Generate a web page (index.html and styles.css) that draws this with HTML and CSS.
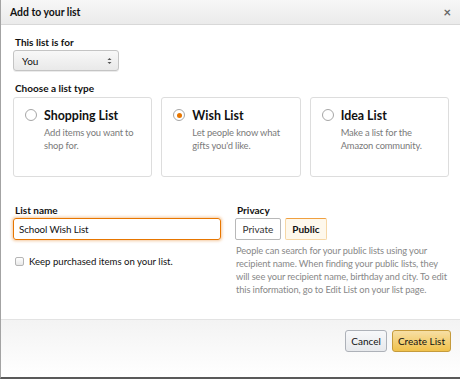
FILE: index.html
```html
<!DOCTYPE html>
<html>
<head>
    <title>Add to your list</title>
    <link rel="stylesheet" href="styles.css">
</head>
<body>
<div class="dialog">
    <div class="header">
        <span>Add to your list</span>
        <span class="close">&#215;</span>
    </div>
    <div class="content">
        <div class="label">This list is for</div>
        <div class="select">
            <span>You</span>
            <svg width="5" height="8" viewBox="0 0 5 8"><path d="M0.5 3 L2.5 1 L4.5 3 Z M0.5 5 L2.5 7 L4.5 5 Z" fill="#555"/></svg>
        </div>

        <div class="label type-label">Choose a list type</div>
        <div class="cards">
            <div class="card">
                <span class="radio"></span>
                <div>
                    <div class="card-title">Shopping List</div>
                    <div class="card-desc">Add items you want to shop for.</div>
                </div>
            </div>
            <div class="card">
                <span class="radio checked"></span>
                <div>
                    <div class="card-title">Wish List</div>
                    <div class="card-desc">Let people know what gifts you'd like.</div>
                </div>
            </div>
            <div class="card">
                <span class="radio"></span>
                <div>
                    <div class="card-title">Idea List</div>
                    <div class="card-desc">Make a list for the Amazon community.</div>
                </div>
            </div>
        </div>

        <div class="row">
            <div class="col-left">
                <div class="label">List name</div>
                <div class="text-input">School Wish List</div>
                <label class="keep"><span class="checkbox"></span>Keep purchased items on your list.</label>
            </div>
            <div class="col-right">
                <div class="label">Privacy</div>
                <div class="toggle">
                    <span class="toggle-btn">Private</span>
                    <span class="toggle-btn active">Public</span>
                </div>
                <p class="note">People can search for your public lists using your recipient name. When finding your public lists, they will see your recipient name, birthday and city. To edit this information, go to Edit List on your list page.</p>
            </div>
        </div>
    </div>
    <div class="footer">
        <span class="btn">Cancel</span>
        <span class="btn primary">Create List</span>
    </div>
</div>
</body>
</html>
```

FILE: styles.css
```css
body {
    margin: 0;
    font-family: Lato, "DejaVu Sans", sans-serif;
    color: #111;
    background-color: white;
}

.dialog {
    height: 379px;
    box-sizing: border-box;
    border-left: 1px solid #a3a3a3;
    border-bottom: 2px solid #5a5a5a;
    display: flex;
    flex-direction: column;
}

.header {
    height: 24px;
    flex: none;
    display: flex;
    align-items: center;
    justify-content: space-between;
    padding: 0 9px 0 9px;
    background: linear-gradient(#f7f7f7, #ebebeb);
    border-bottom: 1px solid #d8d8d8;
    font-size: 10.4px;
    font-weight: bold;
}

.close {
    font-size: 13px;
    color: #666;
}

.content {
    flex: 1;
    padding: 10px 11px 0 12px;
}

.label {
    font-size: 10px;
    font-weight: bold;
    line-height: 14px;
    margin-left: 2px;
}

.select {
    width: 106px;
    height: 21px;
    box-sizing: border-box;
    margin-top: 1px;
    border: 1px solid #c4c4c4;
    border-radius: 3px;
    background: linear-gradient(#f8f8f8, #e9e9e9);
    box-shadow: 0 1px 0 rgba(0, 0, 0, 0.08);
    display: flex;
    align-items: center;
    justify-content: space-between;
    padding: 0 6px 0 8px;
    font-size: 10px;
}

.type-label {
    margin-top: 10px;
}

.cards {
    display: grid;
    grid-template-columns: 1fr 1fr 1fr;
    column-gap: 9px;
    margin-top: 2px;
}

.card {
    height: 80px;
    box-sizing: border-box;
    border: 1px solid #dddddd;
    border-radius: 3px;
    padding: 10px 8px 0 11px;
    display: flex;
    gap: 7px;
}

.radio {
    flex: none;
    width: 12px;
    height: 12px;
    box-sizing: border-box;
    margin-top: 1px;
    border: 1px solid #a6a6a6;
    border-radius: 50%;
    background: white;
    display: flex;
    align-items: center;
    justify-content: center;
}

.radio.checked::after {
    content: "";
    width: 5px;
    height: 5px;
    border-radius: 50%;
    background-color: #e77600;
}

.card-title {
    font-size: 12.4px;
    font-weight: bold;
    line-height: 15px;
}

.card-desc {
    font-size: 9.4px;
    letter-spacing: -0.15px;
    color: #7a7a7a;
    line-height: 13px;
    margin-top: 3px;
}

.row {
    display: flex;
    gap: 14px;
    margin-top: 26px;
}

.col-left {
    width: 208px;
}

.col-right {
    flex: 1;
}

.text-input {
    height: 22px;
    box-sizing: border-box;
    margin-top: 1px;
    border: 1px solid #e77600;
    border-radius: 3px;
    box-shadow: 0 0 3px 1px rgba(228, 121, 17, 0.4);
    padding: 0 5px;
    font-size: 9.8px;
    letter-spacing: -0.1px;
    line-height: 20px;
}

.keep {
    display: flex;
    align-items: center;
    gap: 5px;
    margin-top: 16px;
    margin-left: 2px;
    font-size: 9.6px;
}

.checkbox {
    width: 9px;
    height: 9px;
    box-sizing: border-box;
    border: 1px solid #b5b5b5;
    border-radius: 2px;
    background: linear-gradient(#fff, #e8e8e8);
}

.toggle {
    display: flex;
    gap: 4px;
    margin-top: 1px;
}

.toggle-btn {
    height: 22px;
    box-sizing: border-box;
    border: 1px solid #b8b8b8;
    border-radius: 2px;
    padding: 0 6.5px;
    font-size: 10px;
    line-height: 20px;
    color: #333;
}

.toggle-btn.active {
    font-weight: bold;
    color: #111;
    background-color: #fef8ec;
    border-color: #f6d7a6;
    border-top-color: #f0a040;
}

.note {
    margin: 4px 0 0 1px;
    font-size: 9.3px;
    letter-spacing: -0.12px;
    line-height: 13px;
    color: #888;
}

.footer {
    flex: none;
    height: 58px;
    box-sizing: border-box;
    border-top: 1px solid #e3e3e3;
    background: linear-gradient(#f3f3f3, #ffffff);
    display: flex;
    justify-content: flex-end;
    align-items: flex-start;
    gap: 5px;
    padding: 10px 9px 0 0;
}

.btn {
    height: 22px;
    box-sizing: border-box;
    border: 1px solid #adb1b8;
    border-radius: 3px;
    background: linear-gradient(#f7f8fa, #e7e9ec);
    padding: 0 5px;
    font-size: 10px;
    line-height: 20px;
    color: #111;
}

.btn.primary {
    border-color: #c59b3c;
    background: linear-gradient(#f7dfa5, #f0c14b);
}
```
